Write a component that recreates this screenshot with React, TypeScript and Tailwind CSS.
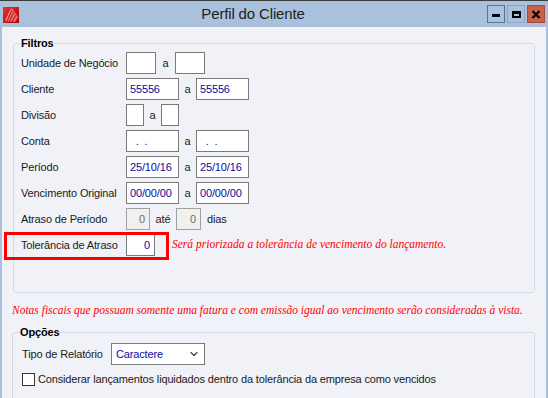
import { ChevronDown } from "lucide-react";

function Logo() {
  return (
    <svg width="16" height="16" viewBox="0 0 16 16">
      <defs>
        <linearGradient id="lg" x1="0" y1="0" x2="1" y2="1">
          <stop offset="0" stopColor="#e83030" />
          <stop offset="1" stopColor="#a80808" />
        </linearGradient>
      </defs>
      <rect width="16" height="16" fill="url(#lg)" />
      <polygon points="2,14 9,1 15,10 12,15" fill="#f56a6a" />
      <path d="M4 14 L9 3 M6 15 L11 5 M9 15 L13 8" stroke="#b01010" strokeWidth="1" />
      <path d="M3 13 L8 2" stroke="#ffb0b0" strokeWidth="0.8" />
    </svg>
  );
}

function TitleBar() {
  return (
    <div className="h-[26px] flex items-center shrink-0">
      <div className="pl-[3px] pt-[2px] w-[19px]">
        <Logo />
      </div>
      <div className="flex-1 text-center text-[15px] text-[#1e1e1e] leading-[26px]">Perfil do Cliente</div>
      <div className="flex gap-[2px] pr-[3px]">
        <div className="w-[18px] h-[18px] border border-[#5b7190] flex items-end justify-center pb-[5px]">
          <div className="w-[8px] h-[3px] bg-black" />
        </div>
        <div className="w-[18px] h-[18px] border border-[#8ea6c4] flex items-center justify-center">
          <div className="w-[9px] h-[7px] border-2 border-black border-t-[3px]" />
        </div>
        <div className="w-[18px] h-[18px] border border-[#a84a3a] bg-[#c8604c] flex items-center justify-center">
          <svg width="10" height="9" viewBox="0 0 10 9">
            <path d="M1.5 1 L8.5 8 M8.5 1 L1.5 8" stroke="#000" strokeWidth="2.2" />
          </svg>
        </div>
      </div>
    </div>
  );
}

function Box({ w, children, disabled }: { w: string; children?: React.ReactNode; disabled?: boolean }) {
  return (
    <div
      className={`${w} h-[22px] border flex items-center whitespace-pre ${
        disabled ? "bg-[#f0f0f0] border-[#a0a0a0] text-[#6d6d6d] justify-end pr-[4px]" : "bg-white border-[#7a7a7a] text-[#0b0ba0] px-[3px]"
      }`}
    >
      {children}
    </div>
  );
}

function Row({ label, children }: { label: string; children: React.ReactNode }) {
  return (
    <div className="h-[22px] flex items-center">
      <span className="w-[105px] shrink-0">{label}</span>
      {children}
    </div>
  );
}

function Sep({ w, t = "a" }: { w: string; t?: string }) {
  return <span className={`${w} text-center shrink-0`}>{t}</span>;
}

export default function App() {
  return (
    <div className="w-[548px] h-[398px] overflow-hidden bg-[#a9c1dd] border-t border-[#3d3d3d] flex flex-col font-['Liberation_Sans',Arial,sans-serif] text-[11px] tracking-[-0.15px] text-[#1a1a1a]">
      <TitleBar />

      <div className="flex-1 min-h-0 mx-[2px] bg-[#f0f2f8] overflow-hidden">
        {/* Filtros */}
        <fieldset className="mt-[9px] ml-[11px] mr-[11px] border border-[#d3dce4] rounded-[3px] px-[7px] pt-[2px] pb-[36px]">
          <legend className="font-bold leading-[14px] text-black">Filtros</legend>
          <div className="flex flex-col gap-[4px]">
            <Row label="Unidade de Negócio">
              <Box w="w-[30px]" />
              <Sep w="w-[19px]" />
              <Box w="w-[30px]" />
            </Row>
            <Row label="Cliente">
              <Box w="w-[53px]">55556</Box>
              <Sep w="w-[17px]" />
              <Box w="w-[53px]">55556</Box>
            </Row>
            <Row label="Divisão">
              <Box w="w-[18px]" />
              <Sep w="w-[17px]" />
              <Box w="w-[18px]" />
            </Row>
            <Row label="Conta">
              <Box w="w-[53px]">{"  .  ."}</Box>
              <Sep w="w-[17px]" />
              <Box w="w-[53px]">{"  .  ."}</Box>
            </Row>
            <Row label="Período">
              <Box w="w-[53px]">25/10/16</Box>
              <Sep w="w-[17px]" />
              <Box w="w-[53px]">25/10/16</Box>
            </Row>
            <Row label="Vencimento Original">
              <Box w="w-[53px]">00/00/00</Box>
              <Sep w="w-[17px]" />
              <Box w="w-[53px]">00/00/00</Box>
            </Row>
            <Row label="Atraso de Período">
              <Box w="w-[24px]" disabled>0</Box>
              <Sep w="w-[26px]" t="até" />
              <Box w="w-[25px]" disabled>0</Box>
              <span className="ml-[6px]">dias</span>
            </Row>
            <div className="relative h-[22px] flex items-center">
              <div className="absolute -left-[17px] -top-[2px] w-[165px] h-[28px] border-[3px] border-[#ff0000]" />
              <span className="w-[105px] shrink-0">Tolerância de Atraso</span>
              <div className="w-[29px] h-[22px] border border-[#7a7a7a] bg-white text-[#0b0ba0] flex items-center justify-end pr-[4px]">0</div>
              <span className="ml-[17px] font-['Liberation_Serif',serif] italic text-[11.5px] tracking-normal text-[#ff0000]">
                Será priorizada a tolerância de vencimento do lançamento.
              </span>
            </div>
          </div>
        </fieldset>

        <p className="mt-[10px] ml-[10px] leading-[14px] font-['Liberation_Serif',serif] italic text-[11.5px] tracking-normal text-[#ff0000] whitespace-nowrap">
          Notas fiscais que possuam somente uma fatura e com emissão igual ao vencimento serão consideradas à vista.
        </p>

        {/* Opções */}
        <fieldset className="mt-[8px] ml-[10px] mr-[11px] border border-[#d3dce4] rounded-[3px] px-[7px] pt-[4px] pb-[20px]">
          <legend className="font-bold leading-[14px] text-black">Opções</legend>
          <div className="pl-[2px] flex flex-col gap-[6px]">
            <div className="h-[22px] flex items-center">
              <span className="w-[89px] shrink-0">Tipo de Relatório</span>
              <div className="w-[94px] h-[22px] border border-[#7a7a7a] bg-white flex items-center pl-[4px] pr-[4px] text-[#0b0ba0]">
                <span className="flex-1">Caractere</span>
                <ChevronDown size={12} strokeWidth={2.2} className="text-[#3a3a3a]" />
              </div>
            </div>
            <div className="h-[16px] flex items-center">
              <div className="w-[13px] h-[13px] border border-[#333] bg-white shrink-0" />
              <span className="ml-[3px]">Considerar lançamentos liquidados dentro da tolerância da empresa como vencidos</span>
            </div>
          </div>
        </fieldset>
      </div>
    </div>
  );
}
